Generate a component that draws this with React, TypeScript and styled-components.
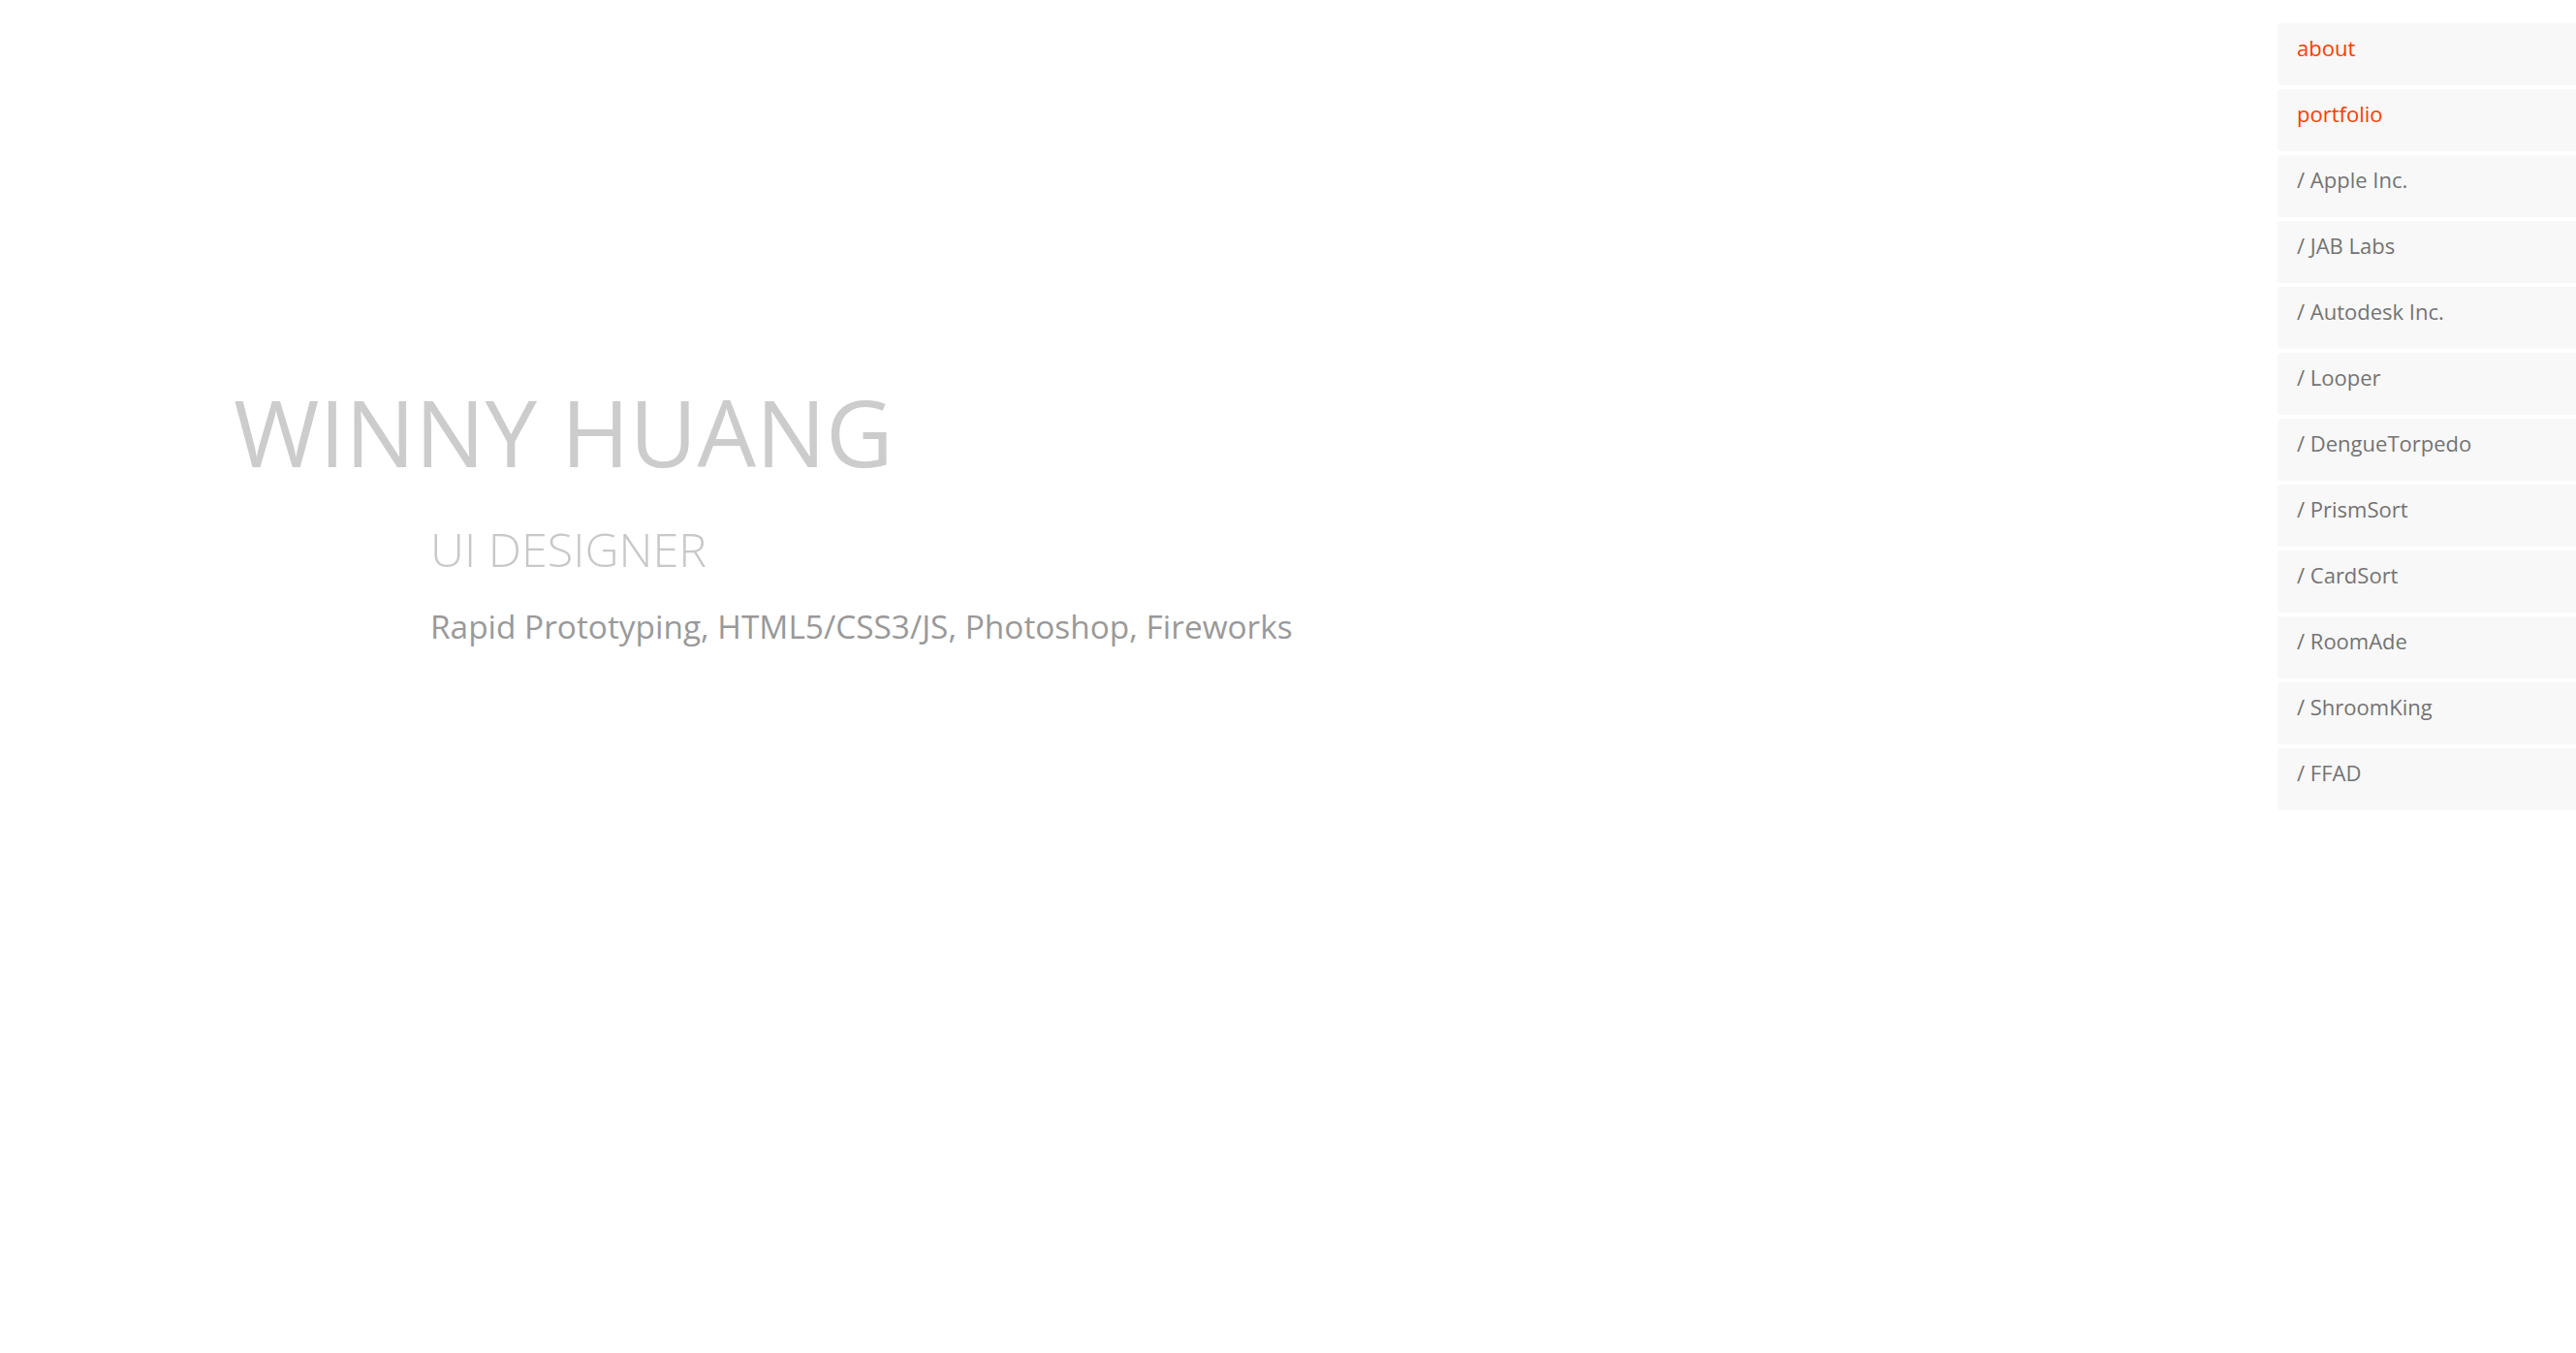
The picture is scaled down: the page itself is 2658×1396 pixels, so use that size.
import styled, { createGlobalStyle } from "styled-components";

const GlobalStyle = createGlobalStyle`
  html, body {
    margin: 0;
    padding: 0;
    background: #fff;
    font-family: "Open Sans", "Liberation Sans", sans-serif;
  }
`;

const Page = styled.div`
  display: flex;
  min-height: 1396px;
`;

const Intro = styled.main`
  flex: 1;
  padding: 380px 0 0 241px;
`;

const Name = styled.h1`
  margin: 0;
  font-size: 95.8px;
  font-weight: 400;
  line-height: 130px;
  color: #ccc;
`;

const Details = styled.div`
  margin: 22px 0 0 203px;
`;

const Role = styled.h2`
  margin: 0;
  font-size: 48.5px;
  font-weight: 300;
  line-height: 68px;
  color: #c8c8c8;
`;

const Skills = styled.p`
  margin: 23px 0 0;
  font-size: 33.4px;
  font-weight: 400;
  line-height: 46px;
  color: #999;
`;

const Nav = styled.nav`
  width: 308px;
  padding-top: 24px;
  display: flex;
  flex-direction: column;
  gap: 4px;
`;

const NavItem = styled.a<{ $accent?: boolean }>`
  display: block;
  box-sizing: border-box;
  height: 64px;
  padding: 10px 20px 0;
  border-radius: 3px 0 0 3px;
  background: #f8f8f8;
  font-size: 22px;
  line-height: 30px;
  color: ${(props) => (props.$accent ? "#ff3c00" : "#737373")};
  text-decoration: none;
`;

const projects = [
  "Apple Inc.",
  "JAB Labs",
  "Autodesk Inc.",
  "Looper",
  "DengueTorpedo",
  "PrismSort",
  "CardSort",
  "RoomAde",
  "ShroomKing",
  "FFAD",
];

function App() {
  return (
    <>
      <GlobalStyle />
      <Page>
        <Intro>
          <Name>WINNY HUANG</Name>
          <Details>
            <Role>UI DESIGNER</Role>
            <Skills>Rapid Prototyping, HTML5/CSS3/JS, Photoshop, Fireworks</Skills>
          </Details>
        </Intro>
        <Nav>
          <NavItem $accent href="#about">about</NavItem>
          <NavItem $accent href="#portfolio">portfolio</NavItem>
          {projects.map((name) => (
            <NavItem key={name} href="#">
              / {name}
            </NavItem>
          ))}
        </Nav>
      </Page>
    </>
  );
}

export default App;
